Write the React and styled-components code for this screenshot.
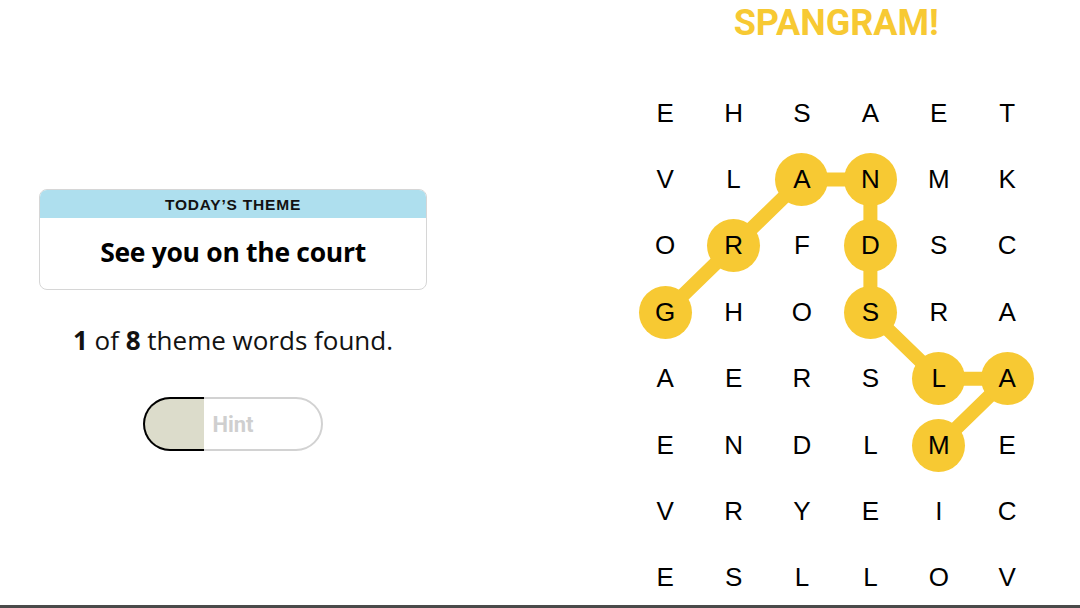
import React from 'react';
import styled, { createGlobalStyle } from 'styled-components';

const GlobalStyle = createGlobalStyle`
  html, body {
    margin: 0;
    padding: 0;
    background: #fff;
  }
  body {
    font-family: "Liberation Sans", Arial, sans-serif;
    color: #000;
  }
`;

const COL_W = 68.4;
const ROW_H = 66.4;
const SPANGRAM = '#f7c933';

const letters = [
  'EHSAET',
  'VLANMK',
  'ORFDSC',
  'GHOSRA',
  'AERSLA',
  'ENDLME',
  'VRYEIC',
  'ESLLOV',
];

// GRANDSLAM path as [row, col]
const path = [
  [3, 0], [2, 1], [1, 2], [1, 3], [2, 3], [3, 3], [4, 4], [4, 5], [5, 4],
];

const Page = styled.div`
  display: flex;
  height: 605px;
  border-bottom: 3px solid #4a4a4a;
  overflow: hidden;
`;

const LeftPanel = styled.div`
  width: 466px;
  flex-shrink: 0;
  display: flex;
  flex-direction: column;
  align-items: center;
  padding-top: 189px;
`;

const ThemeCard = styled.div`
  width: 386px;
  border: 1px solid #d6d6d6;
  border-radius: 8px;
  overflow: hidden;
  flex-shrink: 0;
`;

const ThemeHeader = styled.div`
  background: #aedfee;
  height: 28px;
  display: flex;
  align-items: center;
  justify-content: center;
  font-family: "Liberation Sans", Arial, sans-serif;
  font-size: 15.5px;
  font-weight: 700;
  letter-spacing: 0.8px;
  color: #121212;
  padding-top: 2px;
  box-sizing: border-box;
`;

const ThemeBody = styled.div`
  height: 71px;
  display: flex;
  align-items: center;
  justify-content: center;
  font-family: "Open Sans", "Liberation Sans", sans-serif;
  font-size: 26.5px;
  font-weight: 700;
  letter-spacing: -0.3px;
  color: #000;
  padding-bottom: 4px;
  box-sizing: border-box;
`;

const FoundText = styled.p`
  margin: 32px 0 0;
  font-family: "Open Sans", "Liberation Sans", sans-serif;
  font-size: 26px;
  color: #121212;
  flex-shrink: 0;
  b {
    font-weight: 700;
  }
`;

const HintButton = styled.div`
  margin-top: 39px;
  width: 180px;
  height: 54px;
  flex-shrink: 0;
  border: 2px solid #d2d2d2;
  border-radius: 27px;
  box-sizing: border-box;
  position: relative;
  display: flex;
  align-items: center;
  justify-content: center;
  font-family: Roboto, "Liberation Sans", sans-serif;
  font-size: 22px;
  font-weight: 700;
  color: #cfcfcf;
`;

const HintFill = styled.div`
  position: absolute;
  left: -2px;
  top: -2px;
  bottom: -2px;
  width: 61px;
  background: #dcdccb;
  border: 2px solid #000;
  border-right: none;
  border-radius: 27px 0 0 27px;
  box-sizing: border-box;
`;

const HintLabel = styled.span`
  position: relative;
  margin-top: 1px;
`;

const RightPanel = styled.div`
  margin-left: 165px;
  width: ${COL_W * 6}px;
  flex-shrink: 0;
  display: flex;
  flex-direction: column;
  align-items: center;
`;

const Title = styled.h1`
  margin: 0;
  height: 80px;
  flex-shrink: 0;
  line-height: 46px;
  font-family: Roboto, "Liberation Sans", sans-serif;
  font-size: 36px;
  font-weight: 700;
  color: ${SPANGRAM};
`;

const Board = styled.div`
  position: relative;
  flex-shrink: 0;
  display: grid;
  grid-template-columns: repeat(6, ${COL_W}px);
  grid-template-rows: repeat(8, ${ROW_H}px);
`;

const Lines = styled.svg`
  position: absolute;
  left: 0;
  top: 0;
  z-index: 0;
`;

const Cell = styled.div`
  position: relative;
  z-index: 1;
  display: flex;
  align-items: center;
  justify-content: center;
`;

const Letter = styled.span`
  width: 53px;
  height: 53px;
  border-radius: 50%;
  display: flex;
  align-items: center;
  justify-content: center;
  background: ${(p) => (p.$found ? SPANGRAM : 'transparent')};
  font-family: "Liberation Sans", Arial, sans-serif;
  font-size: 26px;
  color: #000;
`;

const isFound = (r, c) => path.some(([pr, pc]) => pr === r && pc === c);

const center = ([r, c]) => [c * COL_W + COL_W / 2, r * ROW_H + ROW_H / 2];

export default function App() {
  const points = path.map(center).map(([x, y]) => `${x},${y}`).join(' ');
  return (
    <>
      <GlobalStyle />
      <Page>
        <LeftPanel>
          <ThemeCard>
            <ThemeHeader>TODAY’S THEME</ThemeHeader>
            <ThemeBody>See you on the court</ThemeBody>
          </ThemeCard>
          <FoundText>
            <b>1</b> of <b>8</b> theme words found.
          </FoundText>
          <HintButton>
            <HintFill />
            <HintLabel>Hint</HintLabel>
          </HintButton>
        </LeftPanel>
        <RightPanel>
          <Title>SPANGRAM!</Title>
          <Board>
            <Lines width={COL_W * 6} height={ROW_H * 8}>
              <polyline
                points={points}
                fill="none"
                stroke={SPANGRAM}
                strokeWidth="14"
                strokeLinejoin="round"
              />
            </Lines>
            {letters.map((row, r) =>
              row.split('').map((ch, c) => (
                <Cell key={`${r}-${c}`}>
                  <Letter $found={isFound(r, c)}>{ch}</Letter>
                </Cell>
              ))
            )}
          </Board>
        </RightPanel>
      </Page>
    </>
  );
}
